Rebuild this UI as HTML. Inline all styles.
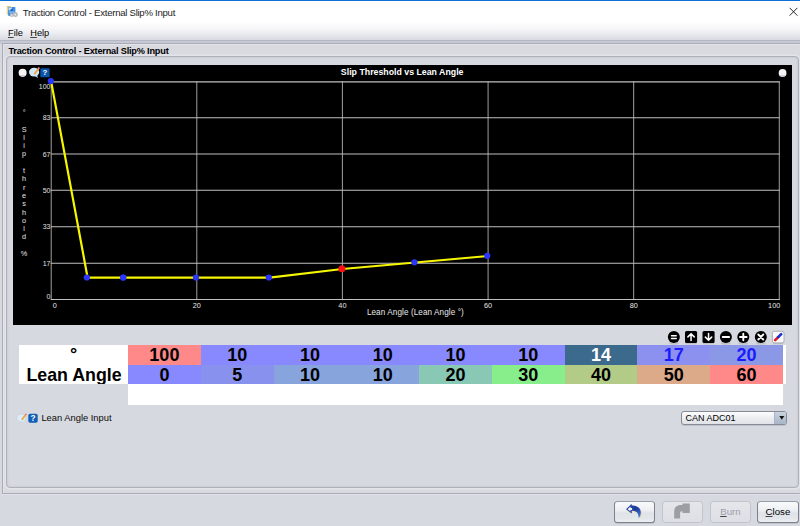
<!DOCTYPE html>
<html><head><meta charset="utf-8">
<style>
html,body{margin:0;padding:0;}
body{width:800px;height:526px;overflow:hidden;background:#d6d9df;font-family:"Liberation Sans",sans-serif;font-size:8.8px;color:#000;position:relative;}
.abs{position:absolute;white-space:nowrap;}
#titlebar{left:0;top:0;width:800px;height:24px;background:#fff;border-top:1px solid #0f6fd2;box-sizing:border-box;}
#title{left:22.8px;top:7.1px;font-size:9.6px;line-height:12px;letter-spacing:-0.27px;color:#1c1c1c;}
#menubar{left:0;top:23px;width:800px;height:17.5px;background:linear-gradient(#fdfdfe 0%,#f7f7f9 30%,#ebecf0 62%,#d8dae1 100%);border-bottom:1px solid #b4b7c3;box-sizing:border-box;}
#menuhl{left:0;top:40.5px;width:800px;height:3px;background:#c6c9d4;}
#menubar span{position:absolute;top:5.1px;font-size:9.25px;line-height:11px;}
#menubar u,.btn u{text-decoration-thickness:0.8px;text-underline-offset:1.2px;text-decoration-color:#444;}
#outer{left:1.8px;top:43px;width:806px;height:450.9px;box-sizing:border-box;border:1px solid #a9acb8;box-shadow:0 1px 0 #dfe1e7, inset 1px 1px 0 #e2e4ea;background:#d8dae0;}
#hdr{z-index:3;left:8.4px;top:45.6px;font-weight:bold;font-size:9.2px;line-height:11px;letter-spacing:-0.2px;}
#inner{left:5.9px;top:56px;width:793.1px;height:431.9px;box-sizing:border-box;border:1px solid #aeb1ba;border-radius:4px;box-shadow:inset 0 0 2px 0.5px #c4c7cf, 0 0 0 1.6px #e2e4ea;background:#d6d9df;}
#chart{left:13.2px;top:64.8px;width:778.7px;height:260.2px;background:#000;overflow:hidden;}
.cell{position:absolute;height:19.5px;line-height:20px;text-align:center;font-weight:bold;font-size:18px;white-space:nowrap;}
.r1{top:345.3px;height:19.5px;}
.r2{top:364.8px;height:19px;line-height:21.5px;overflow:hidden;}
.btn{position:absolute;top:501.3px;height:21.4px;box-sizing:border-box;border:1px solid #7d818b;border-top-color:#9a9ea8;border-radius:3.5px;background:linear-gradient(#f9fafb 0%,#eef0f3 40%,#e0e3e8 55%,#e2e5ea 80%,#eceef1 100%);font-size:9.7px;text-align:center;line-height:20.6px;box-shadow:0 1px 0.5px #c0c3ca;}
.dis{border-color:#c1c4cc;background:linear-gradient(#e4e6ea,#dddfe5);color:#9c9fa8;box-shadow:none;}
</style></head><body>
<div id="titlebar" class="abs"></div>
<svg class="abs" style="left:6px;top:5px" width="13" height="13" viewBox="6 5 13 13">
<path d="M6.800 6h3.600l.9 1h1v7.600H6.800z" fill="#e3c46e"/>
<path d="M7.300 7.400h4.600v7H7.300z" fill="#f0dc9c"/>
<rect x="8.100" y="6.900" width="7.300" height="9.100" rx="0.900" fill="#3d8ee0"/>
<path d="M8.600 7.500h3.300v2.800H8.600z" fill="#cfe4fa"/>
<circle cx="11.700" cy="10.100" r="1.300" fill="#1f63c2"/>
<rect x="9" y="11.600" width="5.200" height="1" fill="#a8cdf4"/>
<circle cx="15.300" cy="14.600" r="2.500" fill="#b5b8bf"/><circle cx="15.300" cy="14.600" r="0.900" fill="#eef0f4"/>
<circle cx="11.600" cy="15.100" r="1.900" fill="#b9bcc3"/><circle cx="11.600" cy="15.100" r="0.700" fill="#eef0f4"/>
</svg>
<div id="title" class="abs">Traction Control - External Slip% Input</div>
<svg class="abs" style="left:788px;top:6px" width="11" height="11" viewBox="788 6 11 11"><path d="M789.600 7.850l7.800 7.800M797.400 7.850l-7.800 7.800" stroke="#1e1e1e" stroke-width="0.950" fill="none"/></svg>
<div id="menubar" class="abs"><span style="left:8px"><u>F</u>ile</span><span style="left:30.2px"><u>H</u>elp</span></div>
<div id="menuhl" class="abs"></div>
<div id="outer" class="abs"></div>
<div id="hdr" class="abs">Traction Control - External Slip% Input</div>
<div id="inner" class="abs"></div>
<div id="chart" class="abs">
<svg width="778.7" height="260.2" viewBox="13.2 64.8 778.7 260.2" style="position:absolute;left:0;top:0" font-family="Liberation Sans, sans-serif">
<g stroke="#a2a2a2" stroke-width="1">
<line x1="51.4" y1="81.2" x2="51.4" y2="299.9"/>
<line x1="197.0" y1="81.2" x2="197.0" y2="299.9"/>
<line x1="342.6" y1="81.2" x2="342.6" y2="299.9"/>
<line x1="488.3" y1="81.2" x2="488.3" y2="299.9"/>
<line x1="633.9" y1="81.2" x2="633.9" y2="299.9"/>
<line x1="779.5" y1="81.2" x2="779.5" y2="299.9"/>
</g><g stroke="#c0c0c0" stroke-width="1.1">
<line x1="50.9" y1="81.7" x2="780" y2="81.7"/>
<line x1="50.9" y1="117.6" x2="780" y2="117.6"/>
<line x1="50.9" y1="153.8" x2="780" y2="153.8"/>
<line x1="50.9" y1="190.0" x2="780" y2="190.0"/>
<line x1="50.9" y1="226.5" x2="780" y2="226.5"/>
<line x1="50.9" y1="263.0" x2="780" y2="263.0"/>
<line x1="50.9" y1="299.3" x2="780" y2="299.3"/>
</g>
<polyline fill="none" stroke="#f6f600" stroke-width="2.2" stroke-linejoin="round" points="51.4,81.7 87.8,277.5 124.2,277.5 124.2,277.5 197.0,277.5 269.8,277.5 342.6,268.8 415.4,262.3 488.3,255.8"/>
<g fill="#2a36ff">
<circle cx="51.0" cy="80.9" r="3.1"/>
<circle cx="87.0" cy="277.3" r="3.1"/>
<circle cx="123.4" cy="277.3" r="3.1"/>
<circle cx="123.4" cy="277.3" r="3.1"/>
<circle cx="196.2" cy="277.3" r="3.1"/>
<circle cx="269.0" cy="277.3" r="3.1"/>
<circle cx="414.6" cy="262.1" r="3.1"/>
<circle cx="487.5" cy="255.6" r="3.1"/>
</g>
<circle cx="342.1" cy="268.6" r="3.5" fill="#ff1010"/>
<g fill="#e0e0e0" font-size="7" text-anchor="end">
<text x="50.6" y="88.5">100</text>
<text x="50.6" y="120.2">83</text>
<text x="50.6" y="156.4">67</text>
<text x="50.6" y="192.6">50</text>
<text x="50.6" y="229.1">33</text>
<text x="50.6" y="265.6">17</text>
<text x="50.6" y="298.5">0</text>
</g>
<g fill="#e8e8e8" font-size="7.3" text-anchor="middle">
<text x="55.0" y="308.3">0</text>
<text x="197.0" y="308.3">20</text>
<text x="342.6" y="308.3">40</text>
<text x="488.3" y="308.3">60</text>
<text x="633.9" y="308.3">80</text>
<text x="774.4" y="308.3">100</text>
</g>
<text x="415.6" y="314.6" fill="#e8e8e8" font-size="8.15" letter-spacing="0.1" text-anchor="middle">Lean Angle (Lean Angle °)</text>
<text x="402.4" y="74.4" fill="#fff" font-size="8.8" font-weight="bold" text-anchor="middle">Slip Threshold vs Lean Angle</text>
<g fill="#e8e8e8" font-size="7.3" text-anchor="middle">
<text x="24.3" y="114.8">°</text>
<text x="24.3" y="131.4">S</text>
<text x="24.3" y="139.7">l</text>
<text x="24.3" y="148.0">i</text>
<text x="24.3" y="156.3">p</text>
<text x="24.3" y="172.9">t</text>
<text x="24.3" y="181.2">h</text>
<text x="24.3" y="189.5">r</text>
<text x="24.3" y="197.8">e</text>
<text x="24.3" y="206.1">s</text>
<text x="24.3" y="214.4">h</text>
<text x="24.3" y="222.7">o</text>
<text x="24.3" y="231.0">l</text>
<text x="24.3" y="239.3">d</text>
<text x="24.3" y="255.9">%</text>
</g>
<!-- chart icons -->
<circle cx="22.8" cy="72.500" r="4" fill="#f4f4f6"/><path d="M19.500 74.700a4 4 0 0 0 6.600 0z" fill="#cfd0da"/>
<ellipse cx="34.300" cy="71.900" rx="5.100" ry="4.400" fill="#cfe8f6"/><path d="M34.500 75.500l3.700 2.200-1.300-3.400z" fill="#c4e0f0"/>
<path d="M35 73.300l3.500-4.500" stroke="#f0a23c" stroke-width="1.900" stroke-linecap="round"/><circle cx="38.900" cy="68" r="1" fill="#f28aa0"/>
<rect x="40.500" y="68" width="9.300" height="9" rx="0.800" fill="#0b55a8"/>
<text x="45.150" y="75.300" font-size="7.800" font-weight="bold" fill="#fff" text-anchor="middle">?</text>
<circle cx="782.800" cy="72.700" r="3.900" fill="#f4f4f6"/><path d="M779.600 74.900a3.900 3.900 0 0 0 6.400 0z" fill="#cfd0da"/>
</svg>
</div>
<!-- toolbar icons -->
<svg class="abs" style="left:664px;top:328px" width="126" height="18" viewBox="664 328 126 18">
<g fill="#b9bcc4" opacity="0.8">
<ellipse cx="673.850" cy="343.300" rx="5" ry="1.300"/><rect x="685.500" y="342.500" width="11.100" height="1.800" rx="0.900"/><rect x="703" y="342.500" width="11.100" height="1.800" rx="0.900"/>
<ellipse cx="725.900" cy="343.300" rx="5" ry="1.300"/><ellipse cx="743.300" cy="343.300" rx="5" ry="1.300"/><ellipse cx="760.800" cy="343.300" rx="5" ry="1.300"/><rect x="773" y="342.600" width="10.400" height="1.600" rx="0.800"/>
</g>
<g fill="#000">
<circle cx="673.850" cy="337" r="6"/>
<rect x="685" y="331" width="12.100" height="12" rx="1.500"/>
<rect x="702.500" y="331" width="12.100" height="12" rx="1.500"/>
<circle cx="725.900" cy="337" r="6"/><circle cx="743.300" cy="337" r="6"/><circle cx="760.800" cy="337" r="6"/>
</g>
<g stroke="#fff" stroke-width="1.500" fill="none" stroke-linecap="round">
<path d="M671.500 335.700h4.700M671.500 338.400h4.700"/>
<path d="M691.050 340.500v-6.600M687.900 336.900l3.150-3.200 3.150 3.200"/>
<path d="M708.550 333.500v6.600M705.400 337.100l3.150 3.200 3.150-3.200"/>
<path d="M722.700 337h6.400" stroke-width="1.900"/>
<path d="M740 337h6.600M743.300 333.700v6.600" stroke-width="1.900"/>
<path d="M758.300 334.500l5 5M763.300 334.500l-5 5" stroke-width="1.800"/>
</g>
<rect x="772.400" y="331.300" width="11.600" height="11.600" rx="2" fill="#fafafb" stroke="#9c9fa8" stroke-width="0.800"/>
<path d="M775.200 340.100l3-3" stroke="#e81818" stroke-width="2.600" stroke-linecap="round"/>
<path d="M778.200 337.100l3-3" stroke="#1c2fd0" stroke-width="2.600" stroke-linecap="round"/>
</svg>
<!-- table -->
<div class="abs" style="left:19px;top:345.300px;width:109px;height:38.500px;background:#fff;"></div>
<div class="abs" style="left:128px;top:345.300px;width:658px;height:38.500px;background:#fff;"></div>
<div class="abs" style="left:128px;top:383.800px;width:655px;height:21.200px;background:#fff;"></div>
<div class="cell r1" style="left:19px;width:109px;line-height:18.600px;">°</div>
<div class="cell r2" style="left:19.500px;width:109px;font-size:17.800px;">Lean Angle</div>
<div class="cell r1" style="left:128.0px;width:72.78px;background:#ff8888;color:#000;">100</div>
<div class="cell r1" style="left:200.78px;width:72.78px;background:#8888ff;color:#000;">10</div>
<div class="cell r1" style="left:273.56px;width:72.77px;background:#8888ff;color:#000;">10</div>
<div class="cell r1" style="left:346.33px;width:72.78px;background:#8888ff;color:#000;">10</div>
<div class="cell r1" style="left:419.11px;width:72.78px;background:#8888ff;color:#000;">10</div>
<div class="cell r1" style="left:491.89px;width:72.78px;background:#8888ff;color:#000;">10</div>
<div class="cell r1" style="left:564.67px;width:72.77px;background:#3c6a8c;color:#fff;">14</div>
<div class="cell r1" style="left:637.44px;width:72.78px;background:#8c90ee;color:#1a1aff;">17</div>
<div class="cell r1" style="left:710.22px;width:72.78px;background:#8a98e6;color:#1a1aff;">20</div>
<div class="cell r2" style="left:128.0px;width:72.78px;background:#8888ff;">0</div>
<div class="cell r2" style="left:200.78px;width:72.78px;background:#8892ee;">5</div>
<div class="cell r2" style="left:273.56px;width:72.77px;background:#88a4dc;">10</div>
<div class="cell r2" style="left:346.33px;width:72.78px;background:#88a4dc;">10</div>
<div class="cell r2" style="left:419.11px;width:72.78px;background:#88c8b4;">20</div>
<div class="cell r2" style="left:491.89px;width:72.78px;background:#88ee8c;">30</div>
<div class="cell r2" style="left:564.67px;width:72.77px;background:#b2cc88;">40</div>
<div class="cell r2" style="left:637.44px;width:72.78px;background:#dcaa88;">50</div>
<div class="cell r2" style="left:710.22px;width:72.78px;background:#ff8888;">60</div>
<!-- lean angle input row -->
<svg class="abs" style="left:16px;top:412px" width="23" height="12" viewBox="16 412 23 12">
<ellipse cx="21.400" cy="418" rx="4.600" ry="4" fill="#dcecf6" stroke="#b5c7d6" stroke-width="0.400"/><path d="M21.500 421.300l3.300 1.700-1.100-3z" fill="#d3e5f1"/>
<path d="M22.200 419.300l3.200-4.200" stroke="#f0a23c" stroke-width="1.700" stroke-linecap="round"/><circle cx="25.800" cy="414.300" r="0.900" fill="#ee6f8a"/>
<rect x="28.300" y="413.700" width="9.400" height="9.100" rx="1.800" fill="#0f5fb8"/>
<text x="33" y="421.300" font-size="8.300" font-weight="bold" fill="#fff" text-anchor="middle" font-family="Liberation Sans, sans-serif">?</text>
</svg>
<div class="abs" style="left:41.400px;top:413.200px;font-size:9.350px;line-height:11px;color:#0a0a0a;">Lean Angle Input</div>
<div class="abs" style="left:681px;top:411.400px;width:106.400px;height:13.500px;box-sizing:border-box;border:1px solid #868a94;border-radius:3px;background:linear-gradient(#fdfdfe,#eceef1 50%,#dfe2e7);box-shadow:0 1px 0.500px #bfc2ca;overflow:hidden;">
<div class="abs" style="left:3.500px;top:1.100px;font-size:9px;line-height:10px;">CAN ADC01</div>
<div class="abs" style="right:0;top:0;width:11.500px;height:12px;background:linear-gradient(#c9d4e0,#a7b6c8);border-left:1px solid #a9b4c3;"></div>
<svg class="abs" style="left:96.600px;top:4.100px" width="6" height="5" viewBox="0 0 6 5"><path d="M0.300 0h5l-2.500 3.800z" fill="#111"/></svg>
</div>
<!-- buttons -->
<div class="btn" style="left:613.700px;width:41.800px;"></div>
<div class="btn dis" style="left:661.700px;width:41.300px;"></div>
<div class="btn dis" style="left:709.500px;width:41.800px;"><u>B</u>urn</div>
<div class="btn" style="left:757px;width:41.800px;"><u>C</u>lose</div>
<svg class="abs" style="left:622px;top:501px" width="24" height="21" viewBox="622 501 24 21">
<defs><linearGradient id="ug" x1="0" y1="0" x2="0.6" y2="1"><stop offset="0" stop-color="#2a50a8"/><stop offset="0.55" stop-color="#1b3c9c"/><stop offset="1" stop-color="#3c6fd0"/></linearGradient></defs>
<path d="M627 510.200L632.500 504.800v1.700c5.500-.2 9.300 2.600 9.100 7.300-.1 2-.9 3.600-2.200 5.100.2-4.400-1.500-7.300-6.900-7.300v2.600z" fill="#e8d9a8"/>
<path d="M626 509.300L631.700 503.800v1.800c5.500-.2 9.300 2.600 9.100 7.300-.1 2-.9 3.600-2.200 5.100.2-4.400-1.500-7.300-6.900-7.300v2.700z" fill="url(#ug)"/>
<path d="M627.600 509.200l2.900-2.700v1.400h1.600v2.100h-1.600v1.600z" fill="#f2f6fc"/>
</svg>
<svg class="abs" style="left:670px;top:501px" width="24" height="21" viewBox="670 501 24 21">
<path d="M674.200 518.600v-7.200c0-4.200 2.700-6.400 7.300-6.400h1v-1.400h7.300v9.400h-7.300v-1.700h-.6c-1.200 0-1.800.7-1.800 2v5.300z" fill="#9c9ea3"/>
</svg>
</body></html>
